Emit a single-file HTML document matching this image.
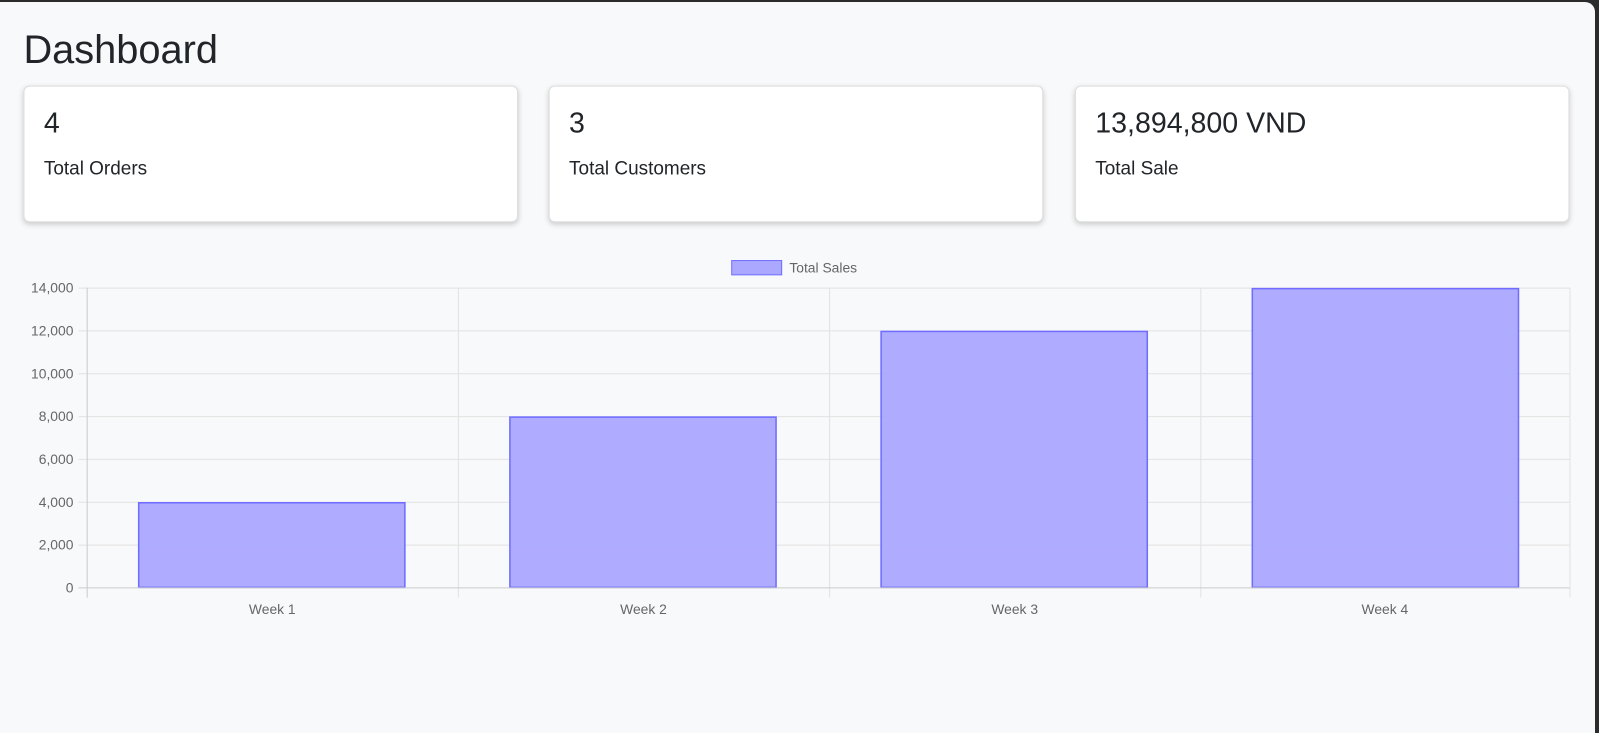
<!DOCTYPE html>
<html><head><style>
html,body{margin:0;padding:0;width:1599px;height:733px;overflow:hidden;background:#2b2b2b;}
.page{position:absolute;left:0;top:2px;width:1595px;height:731px;background:#f8f9fa;border-top-right-radius:10px;}
.wrap{position:absolute;left:0;top:0;width:1568px;height:719px;transform:scale(1.0198);transform-origin:0 0;font-family:"Liberation Sans",Arial,sans-serif;color:#212529;}
h1{position:absolute;left:23px;top:26px;margin:0;font-size:39px;font-weight:400;line-height:48px;}
.card{position:absolute;top:84px;width:485px;height:134px;background:#fff;border:1px solid #ddd;border-radius:6px;box-shadow:0 2px 5px rgba(0,0,0,0.18);box-sizing:border-box;}
.card .n{position:absolute;left:19px;top:20px;font-size:28px;}
.card .l{position:absolute;left:19px;top:69px;font-size:18.6px;}
svg{position:absolute;left:0;top:0;}
</style></head><body>
<div class="page"></div>
<div class="wrap">
<h1>Dashboard</h1>
<div class="card" style="left:23px"><div class="n">4</div><div class="l">Total Orders</div></div>
<div class="card" style="left:538px"><div class="n">3</div><div class="l">Total Customers</div></div>
<div class="card" style="left:1054px"><div class="n">13,894,800 VND</div><div class="l">Total Sale</div></div>
<svg width="1568" height="719" font-family="Liberation Sans, Arial, sans-serif" font-size="13.6" fill="#666">
<rect x="717.5" y="255.5" width="49" height="14" fill="#aba8ff" stroke="#6f6cff"/>
<text x="774" y="267">Total Sales</text>
<g stroke="#e2e2e2" stroke-width="1">
<line x1="77" y1="282.5" x2="1539" y2="282.5"/>
<line x1="77" y1="324.5" x2="1539" y2="324.5"/>
<line x1="77" y1="366.5" x2="1539" y2="366.5"/>
<line x1="77" y1="408.5" x2="1539" y2="408.5"/>
<line x1="77" y1="450.5" x2="1539" y2="450.5"/>
<line x1="77" y1="492.5" x2="1539" y2="492.5"/>
<line x1="77" y1="534.5" x2="1539" y2="534.5"/>
<line x1="449.5" y1="282" x2="449.5" y2="586"/>
<line x1="813.5" y1="282" x2="813.5" y2="586"/>
<line x1="1177.5" y1="282" x2="1177.5" y2="586"/>
<line x1="1539.5" y1="282" x2="1539.5" y2="586"/>
</g>
<g fill="#aba8ff" fill-opacity="0.95" stroke="#6f6cff" stroke-width="1.5">
<rect x="136" y="493" width="261" height="83"/>
<rect x="500" y="409" width="261" height="167"/>
<rect x="864" y="325" width="261" height="251"/>
<rect x="1228" y="283" width="261" height="293"/>
</g>
<g stroke="#ccc"><line x1="85.5" y1="282" x2="85.5" y2="586"/><line x1="77" y1="576.5" x2="1539" y2="576.5"/></g>
<g text-anchor="end">
<text x="72" y="287">14,000</text><text x="72" y="329">12,000</text><text x="72" y="371">10,000</text>
<text x="72" y="413">8,000</text><text x="72" y="455">6,000</text><text x="72" y="497">4,000</text>
<text x="72" y="539">2,000</text><text x="72" y="581">0</text>
</g>
<g text-anchor="middle">
<text x="267" y="602">Week 1</text><text x="631" y="602">Week 2</text><text x="995" y="602">Week 3</text><text x="1358" y="602">Week 4</text>
</g>
</svg>
</div>
</body></html>
